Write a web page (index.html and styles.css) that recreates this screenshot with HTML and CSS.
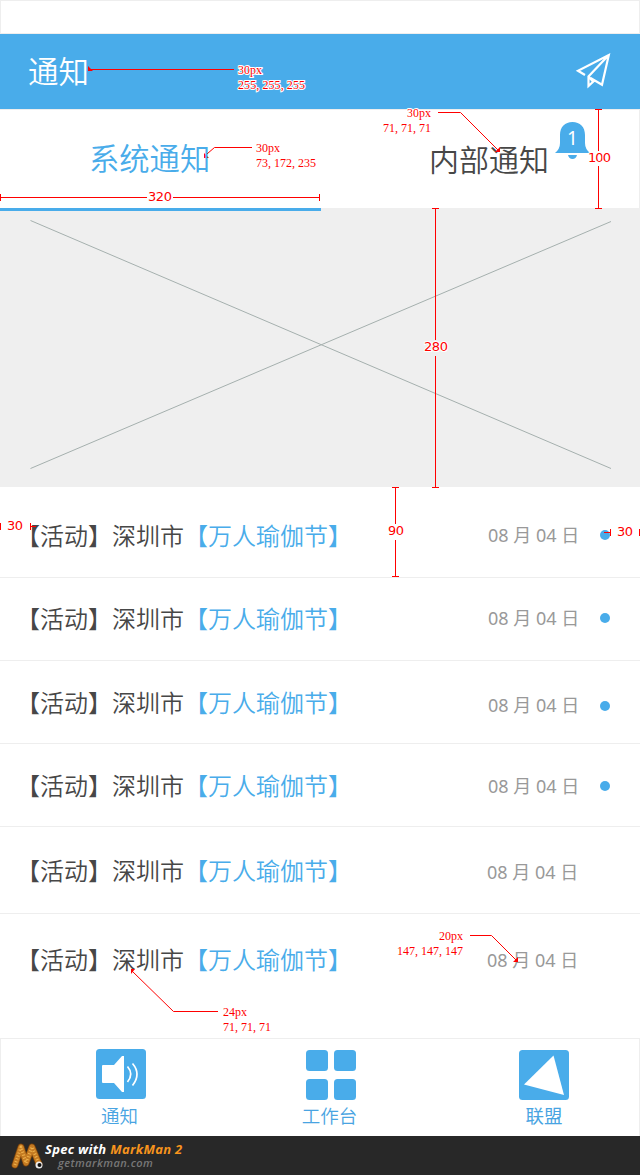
FILE: index.html
```html
<!DOCTYPE html>
<html lang="zh-CN">
<head>
<meta charset="utf-8">
<title>通知</title>
<link rel="stylesheet" href="styles.css">
</head>
<body>
<main class="screen">
  <div class="status"></div>
  <header class="header">
    <h1>通知</h1>
    <svg class="plane" width="36" height="38" viewBox="0 0 36 38" fill="none" stroke="#fff" stroke-width="2.200"><path d="M10 23 3 18.800 33.800 3 27 32.800 15.500 26M33.800 3 13.500 24.500V34L19.500 28.500M14 25 17.500 29"/></svg>
  </header>
  <nav class="tabs">
    <div class="tab active">系统通知</div>
    <div class="tab">内部通知
      <svg class="bell" width="35" height="38" viewBox="0 0 35 38"><path fill="#49acea" d="M0 31Q5 27 5 21V13C5 5 10 0 17.500 0S30 5 30 13V21Q30 27 35 31ZM13 33H22Q21 37 17.500 37T13 33Z"/><text x="17.5" y="23" text-anchor="middle">1</text></svg>
    </div>
  </nav>
  <section class="banner">
    <svg width="640" height="279" viewBox="0 208 640 279"><path d="M30.500 220.500 611 468.500M30.500 468.500 611 221.500" stroke="#a5b0ae" stroke-width="1"/></svg>
  </section>
  <ul class="list">
    <li class="row r1"><span class="title">【活动】深圳市<b>【万人瑜伽节】</b></span><time>08 月 04 日</time><i></i></li>
    <li class="row r2"><span class="title">【活动】深圳市<b>【万人瑜伽节】</b></span><time>08 月 04 日</time><i></i></li>
    <li class="row r3"><span class="title">【活动】深圳市<b>【万人瑜伽节】</b></span><time>08 月 04 日</time><i></i></li>
    <li class="row r4"><span class="title">【活动】深圳市<b>【万人瑜伽节】</b></span><time>08 月 04 日</time><i></i></li>
    <li class="row r5 read"><span class="title">【活动】深圳市<b>【万人瑜伽节】</b></span><time>08 月 04 日</time></li>
    <li class="row r6 read"><span class="title">【活动】深圳市<b>【万人瑜伽节】</b></span><time>08 月 04 日</time></li>
  </ul>
  <footer class="dock">
    <div class="item"><svg width="50" height="50" viewBox="0 0 50 50"><rect width="50" height="50" rx="3.500" fill="#49acea"/><path fill="#fff" d="M7 16H18L26 7H28V43H26L18 34H7Q6 34 6 33V17Q6 16 7 16Z"/><path fill="none" stroke="#fff" stroke-width="1.700" d="M31.500 17.500Q38 25 31.500 33M36.500 14.500Q45.500 25 36.500 36.500"/></svg><span>通知</span></div>
    <div class="item work"><svg width="50" height="50" viewBox="0 0 50 50" fill="#49acea"><rect width="22" height="21" rx="3.500"/><rect x="28" width="22" height="21" rx="3.500"/><rect y="29" width="22" height="21" rx="3.500"/><rect x="28" y="29" width="22" height="21" rx="3.500"/></svg><span>工作台</span></div>
    <div class="item union"><svg width="50" height="50" viewBox="0 0 50 50"><rect width="50" height="50" rx="3.500" fill="#49acea"/><path fill="#fff" d="M34.500 5.500 45 45 5 34.500Z"/></svg><span>联盟</span></div>
  </footer>
  <div class="credit">
    <svg width="34" height="29" viewBox="0 0 34 29" fill="none" stroke-linecap="round" stroke-linejoin="round"><path d="M4 23 10 5 15 21 21 5 28 22" stroke="#75400b" stroke-width="7"/><path d="M4 23 10 5 15 21 21 5 28 22" stroke="#c47a22" stroke-width="5.500"/><path d="M4 23 10 5 15 21 21 5 28 22" stroke="#efb34d" stroke-width="3" stroke-linecap="butt" stroke-dasharray="1 2"/><circle cx="28" cy="23" r="3.500" fill="#eee"/><circle cx="28.500" cy="23" r="2" fill="#111"/></svg>
    <div class="credit-text"><div>Spec with <span>MarkMan 2</span></div><small>getmarkman.com</small></div>
  </div>
  <svg class="notes" width="640" height="1175" viewBox="0 0 640 1175">
    <g class="lines">
      <path d="M91 69.500H234M204 156.500 214.500 147.500H252M438 112.500H460.500L498 150M132 971 173.500 1011.500H218M470 935.500H491.500L516 960"/>
      <path d="M.5 194V201M.5 197.500H147M173 197.500H320M319.500 194V201M595 109.500H602M598.500 110V151M598.500 166V208M595 208.500H602M392 487.500H399M395.500 488V524M395.500 540V576M392 576.500H399M.5 523V530M30.500 523V530M30 526.500H36M604 532.500H610M610.500 529V536M639.500 529V536"/>
      <path d="M435.500 208V340M435.500 356V488M432 208.500H439M432 487.500H439"/>
    </g>
    <path fill="#f00" d="M88 66 93 71H88ZM204 153 209 158H204ZM500 147V152H495ZM131 969H135L131 974ZM518 957V962H513Z"/>
    <g class="dims">
      <text x="148" y="201" textLength="24">320</text><text x="588" y="162" textLength="23">100</text><text x="424" y="351" textLength="24">280</text><text x="388" y="535" textLength="16">90</text><text x="7" y="530" textLength="16">30</text><text x="617" y="536" textLength="16">30</text>
    </g>
    <g class="specs">
      <text class="halo" x="238" y="74" textLength="24">30px</text><text class="halo" x="238" y="89" textLength="67">255, 255, 255</text>
      <text x="256" y="152" textLength="24">30px</text><text x="256" y="167" textLength="60">73, 172, 235</text>
      <text class="halo" x="407" y="117" textLength="24">30px</text><text x="383" y="132" textLength="48">71, 71, 71</text>
      <text x="439" y="940" textLength="24">20px</text><text x="397" y="955" textLength="66">147, 147, 147</text>
      <text x="223" y="1016" textLength="24">24px</text><text x="223" y="1031" textLength="48">71, 71, 71</text>
    </g>
  </svg>
</main>
</body>
</html>
```

FILE: styles.css
```css
* { box-sizing: border-box; }
body { margin: 0; background: #fff; font-family: "Noto Sans", "Noto Sans CJK SC", sans-serif; font-weight: 350; }
.screen { position: relative; width: 640px; height: 1175px; overflow: hidden; }
.status { height: 34px; border: 1px solid #eee; }
.header { height: 75px; background: #49acea; display: flex; justify-content: space-between; padding: 0 29px 0 28px; }
.header h1 { margin: 0; font: 350 30.5px/73px "Noto Sans CJK SC", sans-serif; color: #fff; }
.plane { margin-top: 18px; }
.tabs { height: 99px; display: grid; grid-template-columns: 320px 320px; border: solid #eee; border-width: 1px 1px 0 0; }
.tab { position: relative; height: 98px; padding-left: 109px; font: 350 30px/96px "Noto Sans CJK SC", sans-serif; color: #474747; }
.tab.active { z-index: 1; width: 321px; height: 101px; padding-left: 89px; font-size: 30.3px; line-height: 94px; color: #49acea; border-bottom: 3px solid #49acea; }
.bell { position: absolute; left: 235px; top: 12px; }
.bell text { font: 400 19px "Noto Sans", sans-serif; fill: #fff; }
.banner { height: 279px; background: #efefef; }
.banner svg { display: block; }
.list { margin: 0; padding: 0; list-style: none; }
.row { display: flex; align-items: center; height: 83px; padding: 0 30px 0 16px; border-bottom: 1px solid #eee; }
.title { width: 472px; font: 350 24px/36px "Noto Sans CJK SC", sans-serif; color: #474747; white-space: nowrap; }
.title b { font-weight: 350; color: #49acea; }
.row time { width: 112px; font-size: 18px; font-weight: 400; line-height: 28px; color: #999; white-space: nowrap; }
.row i { width: 10px; height: 10px; border-radius: 50%; background: #49acea; }
.r1 { height: 91px; padding-top: 6px; }
.r2 { padding-bottom: 2px; }
.r3 time { margin-top: 6px; }
.r3 i { margin-top: 8px; }
.r4 time, .r4 i { margin-top: 2px; }
.r5 { height: 87px; }
.r5 time { margin-top: 4px; }
.r6 { height: 125px; padding-bottom: 34px; }
.r6 time { margin-top: 2px; }
.read .title { width: 471px; }
.dock { height: 97px; display: flex; padding: 10px 0 0 96px; border-right: 1px solid #eee; border-left: 1px solid #eee; }
.item { width: 50px; height: 86px; display: flex; flex-direction: column; align-items: center; margin-left: -1px; }
.item svg { flex: none; }
.item span { font: 350 18.5px/32px "Noto Sans CJK SC", sans-serif; color: #49a4e2; white-space: nowrap; margin-left: -3px; }
.item.work { margin: 1px 0 0 160px; }
.item.work span { line-height: 31px; }
.item.union { margin: 1px 0 0 163px; }
.item.union span { font-weight: 400; line-height: 31px; margin-left: 0; }
.credit { height: 39px; background: #282828; display: flex; padding: 6px 0 0 11px; }
.credit-text { font: italic 700 13px/15px "Open Sans", sans-serif; letter-spacing: .3px; color: #fff; white-space: nowrap; }
.credit-text span { color: #f7941d; }
.credit-text small { display: block; margin-left: 13px; font-size: 11px; line-height: 12px; font-weight: 600; letter-spacing: .45px; color: #777; }
.notes { position: absolute; left: 0; top: 0; }
.lines { fill: none; stroke: #f00; stroke-width: 1; }
.dims { font: 400 13px "DejaVu Sans", sans-serif; fill: #f00; stroke: #fff; stroke-width: 2px; paint-order: stroke; }
.specs { font: 400 12px "Liberation Serif", serif; fill: #f00; }
.halo { stroke: #fff; stroke-width: 2px; paint-order: stroke; }
```
